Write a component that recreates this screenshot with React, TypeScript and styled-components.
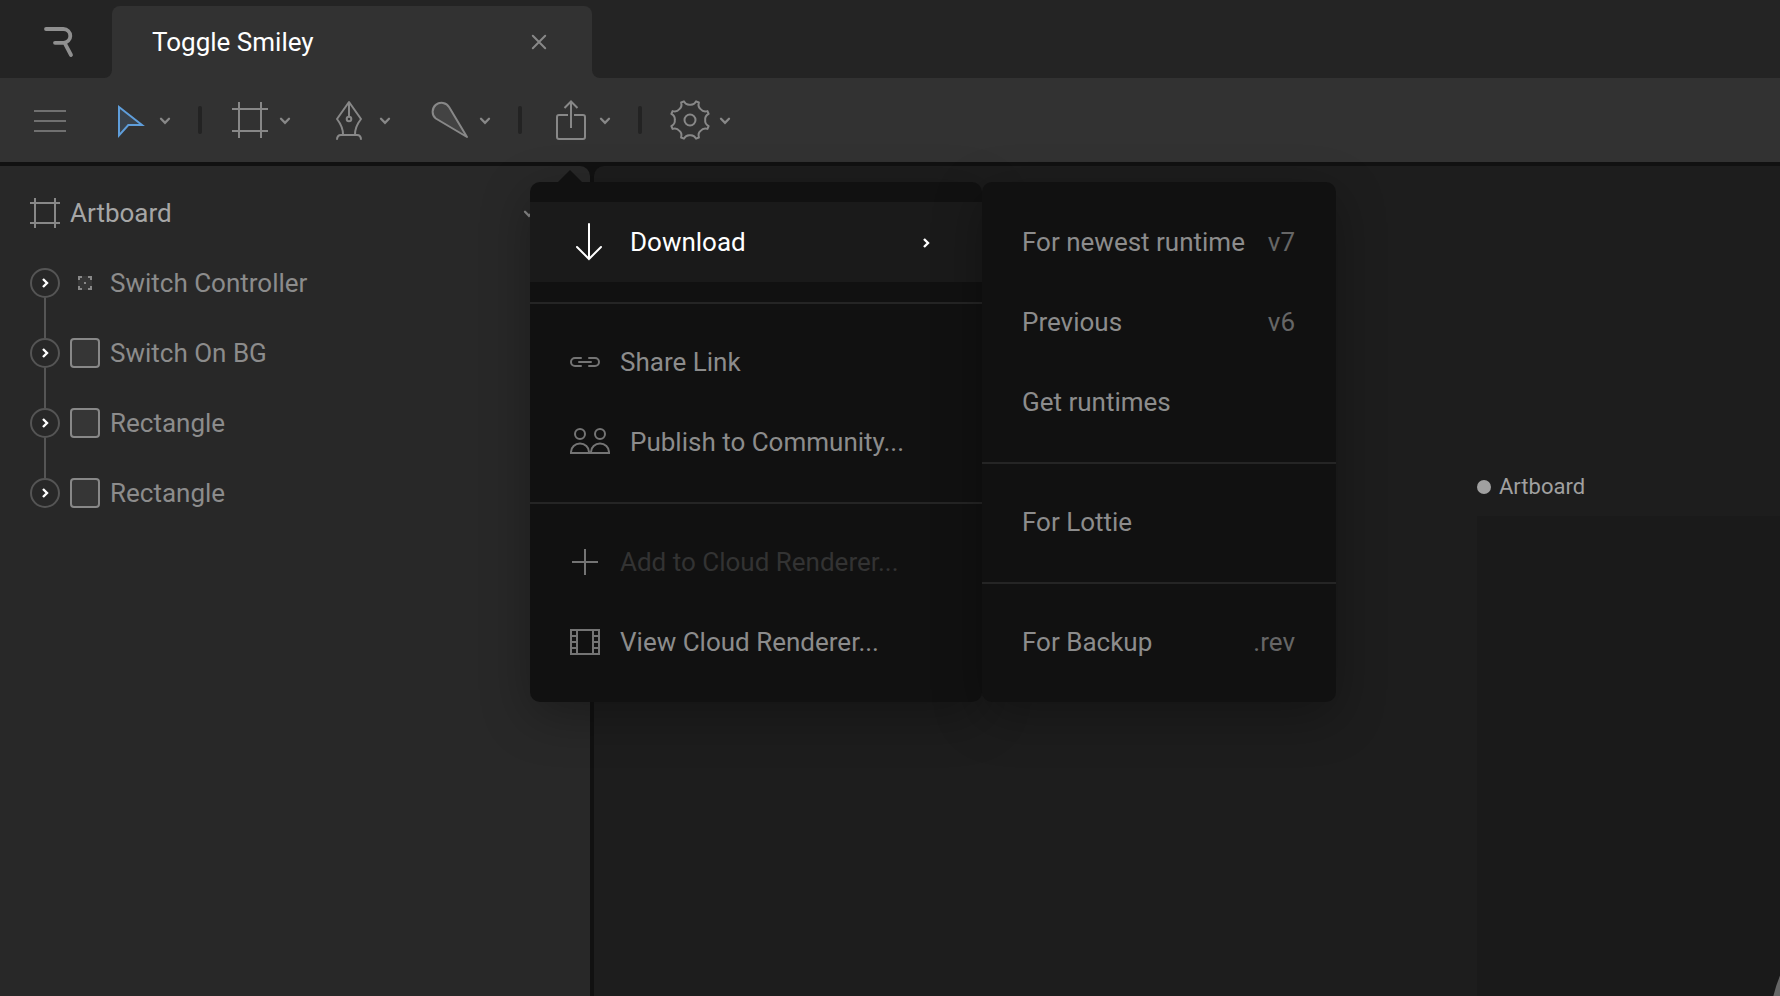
import React from "react";
import styled, { createGlobalStyle } from "styled-components";

const color = {
  chrome: "#242424",
  toolbar: "#323232",
  gutter: "#111111",
  sidebar: "#282828",
  stage: "#1d1d1d",
  board: "#1a1a1a",
  menu: "#111111",
  hover: "#1a1a1a",
  rule: "#252525",
  icon: "#888888",
  menuIcon: "#747474",
  text: "#8c8c8c",
};

const GlobalStyle = createGlobalStyle`
  * { box-sizing: border-box; }
  html, body { margin: 0; padding: 0; background: ${color.gutter}; }
  body { overflow: hidden; }
  svg { display: block; flex: none; overflow: visible; }
`;

const Window = styled.div`
  display: flex;
  flex-direction: column;
  width: 100vw;
  height: 100vh;
  overflow: hidden;
  background: ${color.gutter};
  font-family: Roboto, sans-serif;
  font-size: 26px;
  line-height: 30px;
  color: ${color.text};
  white-space: nowrap;
`;

const TabBar = styled.header`
  display: flex;
  flex: none;
  height: 78px;
  background: ${color.toolbar};
`;

const LogoCell = styled.div`
  display: flex;
  align-items: center;
  width: 112px;
  padding: 6px 0 0 44px;
  background: ${color.chrome};
  border-bottom-right-radius: 8px;
`;

const TabSlot = styled.div`
  width: 480px;
  padding-top: 6px;
  background: linear-gradient(${color.chrome} 24px, ${color.toolbar} 24px);
`;

const Tab = styled.div`
  display: flex;
  align-items: center;
  justify-content: space-between;
  height: 72px;
  padding: 0 46px 0 40px;
  border-radius: 8px 8px 0 0;
  background: ${color.toolbar};
  color: #ffffff;
`;

const TabFill = styled.div`
  flex: 1;
  background: ${color.chrome};
  border-bottom-left-radius: 8px;
`;

const Toolbar = styled.nav`
  display: flex;
  flex: none;
  align-items: flex-start;
  height: 84px;
  background: ${color.toolbar};
`;

const MenuButton = styled.div`
  display: flex;
  align-items: center;
  width: 90px;
  height: 84px;
  padding-left: 30px;
`;

const Tool = styled.div`
  position: relative;
  display: flex;
  align-items: center;
  gap: 10px;
  width: 100px;
  height: 84px;
  padding-left: 20px;
`;

const Separator = styled.div`
  width: 4px;
  height: 28px;
  margin: 28px 8px;
  border-radius: 2px;
  background: #232323;
`;

const Workspace = styled.main`
  display: flex;
  flex: 1;
  gap: 4px;
  padding-top: 4px;
  min-height: 0;
`;

const Sidebar = styled.aside`
  width: 590px;
  padding: 12px 0 0 30px;
  border-top-right-radius: 10px;
  background: ${color.sidebar};
`;

const TreeHeader = styled.div`
  display: flex;
  align-items: center;
  gap: 10px;
  height: 70px;
  padding-right: 56px;
  color: #a6a6a6;
`;

const HeaderLabel = styled.span`
  flex: 1;
`;

const TreeRow = styled.div`
  display: flex;
  align-items: center;
  gap: 10px;
  height: 70px;
`;

const Expander = styled.div<{ $linked: boolean }>`
  position: relative;
  display: flex;
  align-items: center;
  justify-content: center;
  width: 30px;
  height: 30px;
  border: 2px solid #555555;
  border-radius: 50%;

  &::after {
    content: "";
    display: ${(p) => (p.$linked ? "block" : "none")};
    position: absolute;
    top: 28px;
    left: 12px;
    width: 2px;
    height: 40px;
    background: #555555;
  }
`;

const ShapeSwatch = styled.div`
  width: 30px;
  height: 30px;
  border: 2px solid ${color.icon};
  border-radius: 4px;
  background: #363636;
`;

const Stage = styled.section`
  position: relative;
  flex: 1;
  overflow: hidden;
  border-top-left-radius: 10px;
  background: ${color.stage};
`;

const BoardLabel = styled.div`
  position: absolute;
  left: 883px;
  top: 307px;
  display: flex;
  align-items: center;
  gap: 8px;
  font-size: 22px;
  line-height: 28px;
  color: #a0a0a0;
`;

const Dot = styled.span`
  width: 14px;
  height: 14px;
  border-radius: 50%;
  background: #a0a0a0;
`;

const Board = styled.div`
  position: absolute;
  left: 883px;
  top: 350px;
  width: 600px;
  height: 600px;
  overflow: hidden;
  background: ${color.board};
`;

const Face = styled.div`
  position: absolute;
  left: 292px;
  top: 366px;
  width: 300px;
  height: 300px;
  border-radius: 50%;
  background: #666666;
`;

const MenuLayer = styled.div`
  position: absolute;
  z-index: 2;
  left: 0;
  top: 104px;
  display: flex;
`;

const Pointer = styled.div`
  position: absolute;
  left: 28px;
  top: -12px;
  width: 24px;
  height: 12px;
  background: ${color.menu};
  clip-path: polygon(50% 0, 100% 100%, 0 100%);
`;

const MenuPanel = styled.div<{ $width: number }>`
  width: ${(p) => p.$width}px;
  padding: 20px 0;
  border-radius: 10px;
  background: ${color.menu};
  box-shadow: 0 14px 50px rgba(0, 0, 0, 0.3);
`;

const MenuItem = styled.div<{ $state?: "active" | "disabled" }>`
  display: flex;
  align-items: center;
  gap: 20px;
  height: 80px;
  padding: 0 41px 0 40px;
  background: ${(p) => (p.$state === "active" ? color.hover : "transparent")};
  color: ${(p) =>
    p.$state === "active" ? "#ffffff" : p.$state === "disabled" ? "#333333" : color.text};
`;

const ItemLabel = styled.span`
  flex: 1;
`;

const Hint = styled.span`
  color: #666666;
`;

const SubmenuMark = styled.span`
  padding: 2px 11px 0 0;
`;

const Rule = styled.div`
  height: 2px;
  margin: 20px 0 18px;
  background: ${color.rule};
`;

type IconProps = { w: number; h: number; stroke?: string; children: React.ReactNode };

const Icon = ({ w, h, stroke = color.icon, children }: IconProps) => (
  <svg width={w} height={h} viewBox={`0 0 ${w} ${h}`} fill="none" stroke={stroke} strokeWidth={2}>
    {children}
  </svg>
);

const ChevronDown = () => (
  <Icon w={10} h={10}>
    <path d="M1 3.8l4 4 4-4" strokeWidth={2.3} strokeLinecap="round" />
  </Icon>
);

const ChevronRight = () => (
  <Icon w={8} h={10} stroke="#ffffff">
    <path d="M2 1l4 4-4 4" strokeWidth={2.4} />
  </Icon>
);

const Logo = () => (
  <Icon w={30} h={30}>
    <path
      d="M2 2H19.4a6.9 6.9 0 0 1 0 13.8H11M20.6 15.8L27 28"
      strokeWidth={3.8}
      strokeLinecap="round"
      stroke="#8f8f8f"
    />
  </Icon>
);

const Frame = ({ size, inset }: { size: number; inset: number }) => {
  const far = size - inset;
  return (
    <Icon w={size} h={size}>
      <path d={`M${inset} 0V${size}M${far} 0V${size}M0 ${inset}H${size}M0 ${far}H${size}`} />
    </Icon>
  );
};

// Eight-toothed outline: a rounded valley every 45 degrees, a flat tooth between.
const gearPath = (() => {
  const point = (r: number, deg: number) => {
    const a = (deg * Math.PI) / 180;
    return `${(20 + r * Math.sin(a)).toFixed(2)} ${(20 - r * Math.cos(a)).toFixed(2)}`;
  };
  let d = `M${point(19.6, -18)}`;
  for (let k = 0; k < 8; k++) {
    const c = k * 45;
    d += `Q${point(15.2, c - 15)} ${point(15.2, c)}`;
    d += `Q${point(15.2, c + 15)} ${point(19.6, c + 18)}`;
    d += `L${point(19.6, c + 27)}`;
  }
  return d + "Z";
})();

const nodes = [
  { name: "Switch Controller", group: true },
  { name: "Switch On BG", group: false },
  { name: "Rectangle", group: false },
  { name: "Rectangle", group: false },
];

const ShareMenu = () => (
  <MenuLayer>
    <MenuPanel $width={452}>
      <MenuItem $state="active">
        <Icon w={40} h={40} stroke="#ffffff">
          <path d="M19 2V37M7 25l12 12 12-12" strokeLinecap="round" />
        </Icon>
        <ItemLabel>Download</ItemLabel>
        <SubmenuMark>
          <ChevronRight />
        </SubmenuMark>
      </MenuItem>
      <Rule />
      <MenuItem>
        <Icon w={30} h={30} stroke={color.menuIcon}>
          <path
            d="M11 11H5a4 4 0 0 0 0 8h6M19 11h6a4 4 0 0 1 0 8h-6M9 15h12"
            strokeLinecap="round"
          />
        </Icon>
        <ItemLabel>Share Link</ItemLabel>
      </MenuItem>
      <MenuItem>
        <Icon w={40} h={40} stroke={color.menuIcon}>
          <circle cx="10" cy="12" r="5" />
          <circle cx="30" cy="12" r="5" />
          <path d="M1 31V30a9 8.5 0 0 1 18 0v1zM21 31V30a9 8.5 0 0 1 18 0v1z" />
        </Icon>
        <ItemLabel>Publish to Community...</ItemLabel>
      </MenuItem>
      <Rule />
      <MenuItem $state="disabled">
        <Icon w={30} h={30} stroke={color.menuIcon}>
          <path d="M15 2v26M2 15h26" />
        </Icon>
        <ItemLabel>Add to Cloud Renderer...</ItemLabel>
      </MenuItem>
      <MenuItem>
        <Icon w={30} h={30} stroke={color.menuIcon}>
          <path d="M1 3H29V27H1zM7 3V27M23 3V27M1 9h6M1 15h6M1 21h6M23 9h6M23 15h6M23 21h6" />
        </Icon>
        <ItemLabel>View Cloud Renderer...</ItemLabel>
      </MenuItem>
    </MenuPanel>
    <MenuPanel $width={354}>
      <MenuItem>
        <ItemLabel>For newest runtime</ItemLabel>
        <Hint>v7</Hint>
      </MenuItem>
      <MenuItem>
        <ItemLabel>Previous</ItemLabel>
        <Hint>v6</Hint>
      </MenuItem>
      <MenuItem>
        <ItemLabel>Get runtimes</ItemLabel>
      </MenuItem>
      <Rule />
      <MenuItem>
        <ItemLabel>For Lottie</ItemLabel>
      </MenuItem>
      <Rule />
      <MenuItem>
        <ItemLabel>For Backup</ItemLabel>
        <Hint>.rev</Hint>
      </MenuItem>
    </MenuPanel>
    <Pointer />
  </MenuLayer>
);

export default function App() {
  return (
    <>
      <GlobalStyle />
      <Window>
        <TabBar>
          <LogoCell>
            <Logo />
          </LogoCell>
          <TabSlot>
            <Tab>
              Toggle Smiley
              <Icon w={14} h={14}>
                <path d="M0.8 0.8l12.4 12.4M13.2 0.8L0.8 13.2" strokeLinecap="round" />
              </Icon>
            </Tab>
          </TabSlot>
          <TabFill />
        </TabBar>

        <Toolbar>
          <MenuButton>
            <Icon w={40} h={40} stroke="#707070">
              <path d="M4 11h32M4 21h32M4 31h32" />
            </Icon>
          </MenuButton>
          <Tool>
            <Icon w={40} h={40} stroke="#5f9edb">
              <path d="M9 7V35.3L18.3 25H32z" fill="#3a434c" />
            </Icon>
            <ChevronDown />
          </Tool>
          <Separator />
          <Tool>
            <Icon w={40} h={40}>
              <path d="M9 2V38M31 2V38M2 9H38M2 31H38" />
            </Icon>
            <ChevronDown />
          </Tool>
          <Tool>
            <Icon w={40} h={40}>
              <path
                d="M13 34.5C13 29 10.5 23.5 7 19L19 2L31 19C27.5 23.5 25 29 25 34.5"
                strokeLinejoin="round"
              />
              <path d="M19 2V16.5M7 39.8C7 37 8.5 35 11 35H27C29.5 35 31 37 31 39.8" />
              <circle cx="19" cy="19" r="2.3" />
            </Icon>
            <ChevronDown />
          </Tool>
          <Tool>
            <Icon w={40} h={40}>
              <path
                d="M5.8 18.5A8.9 8.9 0 1 1 19.2 7.2L37 37z"
                fill="#434343"
                strokeLinejoin="round"
              />
            </Icon>
            <ChevronDown />
          </Tool>
          <Separator />
          <Tool>
            <Icon w={40} h={40}>
              <path d="M18 15H9a2 2 0 0 0-2 2V37a2 2 0 0 0 2 2H33a2 2 0 0 0 2-2V17a2 2 0 0 0-2-2H24" />
              <path d="M21 28V1.5M14.5 8l6.5-6.5 6.5 6.5" />
            </Icon>
            <ChevronDown />
            <ShareMenu />
          </Tool>
          <Separator />
          <Tool>
            <Icon w={40} h={40}>
              <path d={gearPath} strokeLinejoin="round" />
              <circle cx="20" cy="20" r="5.5" />
            </Icon>
            <ChevronDown />
          </Tool>
        </Toolbar>

        <Workspace>
          <Sidebar>
            <TreeHeader>
              <Frame size={30} inset={5} />
              <HeaderLabel>Artboard</HeaderLabel>
              <ChevronDown />
            </TreeHeader>
            {nodes.map((node, i) => (
              <TreeRow key={i}>
                <Expander $linked={i < nodes.length - 1}>
                  <ChevronRight />
                </Expander>
                {node.group ? (
                  <Icon w={30} h={30}>
                    <path d="M8 8h14v14H8z" fill="#363636" stroke="none" />
                    <path d="M9 12V9h3M18 9h3v3M21 18v3h-3M12 21H9v-3M14 15h2" />
                  </Icon>
                ) : (
                  <ShapeSwatch />
                )}
                {node.name}
              </TreeRow>
            ))}
          </Sidebar>
          <Stage>
            <BoardLabel>
              <Dot />
              Artboard
            </BoardLabel>
            <Board>
              <Face />
            </Board>
          </Stage>
        </Workspace>
      </Window>
    </>
  );
}
